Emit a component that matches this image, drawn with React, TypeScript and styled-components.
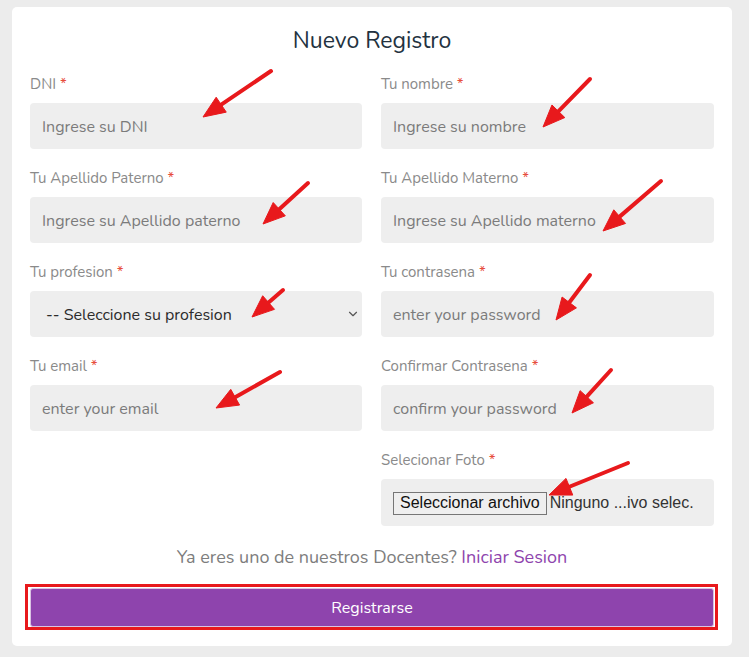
import React, { FC } from 'react';
import styled, { createGlobalStyle } from 'styled-components';
import { ChevronDown } from 'lucide-react';

const GlobalStyle = createGlobalStyle`
  html, body {
    margin: 0;
    padding: 0;
    background: #ececec;
    font-family: 'Nunito', Lato, 'Noto Sans', sans-serif;
  }
  * {
    box-sizing: border-box;
  }
`;

type FieldType = {
  id: string;
  label: string;
  placeholder?: string;
  type?: 'text' | 'password' | 'email' | 'select' | 'file' | 'empty';
};

const fields: FieldType[] = [
  { id: 'dni', label: 'DNI', placeholder: 'Ingrese su DNI' },
  { id: 'nombre', label: 'Tu nombre', placeholder: 'Ingrese su nombre' },
  { id: 'paterno', label: 'Tu Apellido Paterno', placeholder: 'Ingrese su Apellido paterno' },
  { id: 'materno', label: 'Tu Apellido Materno', placeholder: 'Ingrese su Apellido materno' },
  { id: 'profesion', label: 'Tu profesion', type: 'select' },
  { id: 'pass', label: 'Tu contrasena', placeholder: 'enter your password', type: 'password' },
  { id: 'email', label: 'Tu email', placeholder: 'enter your email', type: 'email' },
  { id: 'confirm', label: 'Confirmar Contrasena', placeholder: 'confirm your password', type: 'password' },
  { id: 'blank', label: '', type: 'empty' },
  { id: 'foto', label: 'Selecionar Foto', type: 'file' },
];

// annotation arrows from the screenshot: tail -> tip
const arrows = [
  [271, 71, 203, 117],
  [590, 79, 543, 127],
  [308, 183, 263, 224],
  [661, 181, 603, 231],
  [283, 290, 252, 317],
  [590, 275, 556, 320],
  [280, 372, 216, 408],
  [611, 370, 572, 413],
  [628, 463, 549, 495],
];

const Arrow: FC<{ x1: number; y1: number; x2: number; y2: number }> = ({ x1, y1, x2, y2 }) => {
  const ang = Math.atan2(y2 - y1, x2 - x1);
  const len = 22;
  const half = 9;
  const bx = x2 - Math.cos(ang) * len;
  const by = y2 - Math.sin(ang) * len;
  const px = -Math.sin(ang) * half;
  const py = Math.cos(ang) * half;
  return (
    <g fill="#e8191c" stroke="#e8191c">
      <line x1={x1} y1={y1} x2={bx} y2={by} strokeWidth={4} strokeLinecap="round" />
      <polygon points={`${x2},${y2} ${bx + px},${by + py} ${bx - px},${by - py}`} strokeWidth={1} />
    </g>
  );
};

const App: FC = () => {
  return (
    <Page>
      <GlobalStyle />
      <Card>
        <Title>Nuevo Registro</Title>
        <FormGrid>
          {fields.map((f) => {
            if (f.type === 'empty') return <div key={f.id} />;
            return (
              <Field key={f.id}>
                <Label htmlFor={f.id}>
                  {f.label} <Req>*</Req>
                </Label>
                {f.type === 'select' ? (
                  <SelectWrap>
                    <Select id={f.id} defaultValue="">
                      <option value="">-- Seleccione su profesion</option>
                    </Select>
                    <Chevron>
                      <ChevronDown size={14} strokeWidth={2} />
                    </Chevron>
                  </SelectWrap>
                ) : f.type === 'file' ? (
                  <FileBox>
                    <FileButton type="button">Seleccionar archivo</FileButton>
                    <FileName>Ninguno ...ivo selec.</FileName>
                  </FileBox>
                ) : (
                  <Input id={f.id} type={f.type || 'text'} placeholder={f.placeholder} />
                )}
              </Field>
            );
          })}
        </FormGrid>
        <LoginText>
          Ya eres uno de nuestros Docentes? <LoginLink href="#">Iniciar Sesion</LoginLink>
        </LoginText>
        <SubmitButton type="button">Registrarse</SubmitButton>
      </Card>
      <Overlay width="749" height="657" viewBox="0 0 749 657">
        {arrows.map((a, i) => (
          <Arrow key={i} x1={a[0]} y1={a[1]} x2={a[2]} y2={a[3]} />
        ))}
        <rect x={26.5} y={585.5} width={690} height={43} fill="none" stroke="#e8191c" strokeWidth={3} />
      </Overlay>
    </Page>
  );
};

export default App;

const Page = styled.div`
  position: relative;
  width: 749px;
  min-height: 657px;
  padding: 7px 17px 12px 12px;
`;

const Card = styled.div`
  width: 720px;
  background: #fff;
  border-radius: 5px;
  padding: 19px 18px 19px 18px;
`;

const Title = styled.h2`
  margin: 0 0 18px 0;
  text-align: center;
  font-size: 23px;
  line-height: 30px;
  font-weight: 400;
  color: #233240;
`;

const FormGrid = styled.div`
  display: grid;
  grid-template-columns: 332px 333px;
  column-gap: 19px;
  row-gap: 19px;
`;

const Field = styled.div`
  display: flex;
  flex-direction: column;
  gap: 9px;
`;

const Label = styled.label`
  font-size: 15px;
  line-height: 20px;
  color: #8a8a8a;
`;

const Req = styled.span`
  color: #e74c3c;
`;

const Input = styled.input`
  height: 46px;
  width: 100%;
  border: none;
  border-radius: 4px;
  background: #eeeeee;
  padding: 2px 12px 0 12px;
  font-family: inherit;
  font-size: 16px;
  color: #333;
  outline: none;

  &::placeholder {
    color: #7b7b7b;
  }
`;

const SelectWrap = styled.div`
  position: relative;
`;

const Select = styled.select`
  appearance: none;
  display: block;
  height: 46px;
  width: 100%;
  border: none;
  border-radius: 4px;
  background-color: #eeeeee;
  padding: 2px 24px 0 16px;
  font-family: inherit;
  font-size: 16px;
  color: #2b2b2b;
  outline: none;
`;

const Chevron = styled.span`
  position: absolute;
  right: 2px;
  top: 16px;
  display: flex;
  color: #555;
  pointer-events: none;
`;

const FileBox = styled.div`
  display: flex;
  align-items: center;
  gap: 3px;
  height: 47px;
  border-radius: 4px;
  background: #eeeeee;
  padding: 1px 12px 0 12px;
`;

const FileButton = styled.button`
  height: 23px;
  padding: 0 6px;
  border: 1px solid #767676;
  border-radius: 0;
  background: #efefef;
  font-family: 'Liberation Sans', Arial, sans-serif;
  font-size: 16px;
  color: #111;
`;

const FileName = styled.span`
  font-family: 'Liberation Sans', Arial, sans-serif;
  font-size: 16px;
  color: #333;
  white-space: nowrap;
`;

const LoginText = styled.p`
  margin: 20px 0 20px 0;
  text-align: center;
  font-size: 18px;
  line-height: 22px;
  color: #7d7d7d;
`;

const LoginLink = styled.a`
  color: #8e44ad;
  text-decoration: none;
`;

const SubmitButton = styled.button`
  display: block;
  width: 684px;
  height: 39px;
  padding-top: 2px;
  border: 1px solid #d8c3e2;
  border-radius: 3px;
  background: #8e44ad;
  color: #fff;
  font-family: inherit;
  font-size: 16px;
`;

const Overlay = styled.svg`
  position: absolute;
  left: 0;
  top: 0;
  pointer-events: none;
`;
